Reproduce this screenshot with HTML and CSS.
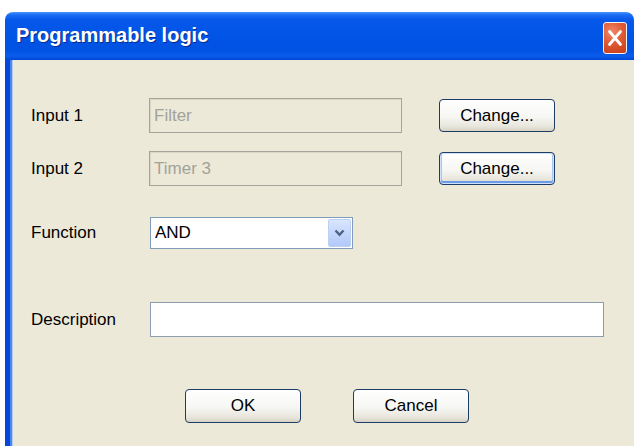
FILE: index.html
```html
<!DOCTYPE html>
<html lang="en">
<head>
<meta charset="utf-8">
<title>Programmable logic</title>
<link rel="stylesheet" href="styles.css">
</head>
<body>
<div class="window">
  <div class="titlebar">
    <span class="title">Programmable logic</span>
    <button class="close" aria-label="Close">
      <svg width="16" height="18" viewBox="0 0 16 18"><path d="M2.5 2.5 L13.5 15.5 M13.5 2.5 L2.5 15.5" stroke="#fff" stroke-width="2.8" stroke-linecap="round" fill="none"/></svg>
    </button>
  </div>
  <div class="content">
    <div class="row row-input1">
      <span class="label">Input 1</span>
      <div class="field disabled">Filter</div>
      <button class="btn change">Change...</button>
    </div>
    <div class="row row-input2">
      <span class="label">Input 2</span>
      <div class="field disabled">Timer 3</div>
      <button class="btn change default">Change...</button>
    </div>
    <div class="row row-function">
      <span class="label">Function</span>
      <div class="select">
        <span class="select-value">AND</span>
        <span class="select-arrow">
          <svg width="11" height="8" viewBox="0 0 11 8"><path d="M1.5 1.5 L5.5 5.8 L9.5 1.5" stroke="#4d6185" stroke-width="2.4" fill="none"/></svg>
        </span>
      </div>
    </div>
    <div class="row row-desc">
      <span class="label">Description</span>
      <div class="field text"></div>
    </div>
    <div class="actions">
      <button class="btn action">OK</button>
      <button class="btn action">Cancel</button>
    </div>
  </div>
</div>
</body>
</html>
```
FILE: styles.css
```css
html, body {
  margin: 0;
  padding: 0;
  background: #ffffff;
  overflow: hidden;
}

body {
  width: 634px;
  height: 446px;
  font-family: "Liberation Sans", Arial, sans-serif;
  font-size: 17px;
  color: #000;
}

.window {
  margin: 12px 0 0 5px;
  width: 629px;
  height: 434px;
  display: flex;
  flex-direction: column;
}

/* XP-style caption bar */
.titlebar {
  height: 48px;
  flex: none;
  display: flex;
  align-items: center;
  padding: 0 7px 0 11px;
  border-radius: 8px 8px 0 0;
  background: linear-gradient(to bottom,
    #4a94ff 0px, #1a6cf4 3px, #0658ea 8px, #0054e6 24px,
    #0052e2 38px, #0a5cec 44px, #0046d0 48px);
}

.title {
  font-weight: bold;
  font-size: 20px;
  color: #fff;
  text-shadow: 1px 1px 0 #0a2a8c;
  padding-bottom: 2px;
}

.close {
  margin-left: auto;
  margin-top: 3px;
  width: 24px;
  height: 32px;
  padding: 0;
  border: 1px solid #f4f4f4;
  border-radius: 3px;
  background: radial-gradient(circle at 35% 30%, #f0896a 0%, #e05a34 45%, #c43c18 100%);
  display: flex;
  align-items: center;
  justify-content: center;
}

/* dialog client area with the blue frame on the left */
.content {
  flex: 1;
  padding: 38px 0 0 26px;
  background: linear-gradient(to right,
    #0a46d8 0px, #0a46d8 5px, #4a8af0 5px, #4a8af0 7px,
    #b4cdf4 7px, #b4cdf4 8px, #ece9d8 8px);
}

.row {
  display: flex;
  align-items: center;
}

.label {
  width: 118px;
  flex: none;
}

.row-input2 { margin-top: 18px; }
.row-function { margin-top: 31px; }
.row-desc { margin-top: 53px; }

.row-function .label,
.row-desc .label { width: 119px; }

.field {
  box-sizing: border-box;
  height: 35px;
  display: flex;
  align-items: center;
  padding-left: 4px;
}

.field.disabled {
  width: 253px;
  border: 1px solid #a6a59b;
  box-shadow: inset 1px 1px 0 #d9d6c8;
  background: #ece9d8;
  color: #a3a29a;
}

.field.text {
  width: 454px;
  border: 1px solid #8f9eae;
  background: #fff;
}

.btn {
  box-sizing: border-box;
  font-family: inherit;
  font-size: 17px;
  color: #000;
  width: 116px;
  padding: 0;
  border: 1px solid #1d3c66;
  border-radius: 4px;
  background: linear-gradient(to bottom, #ffffff 0%, #f6f6f3 55%, #e8e6dc 85%, #d6d2c4 100%);
}

.btn.change {
  height: 33px;
  margin-left: 37px;
}

.btn.default {
  box-shadow: inset 0 0 0 1px #cfe0fa, inset 0 -2px 0 1px #6b9be6, inset 2px 0 0 0 #a9c6f2, inset -2px 0 0 0 #a9c6f2;
}

.select {
  box-sizing: border-box;
  width: 203px;
  height: 32px;
  border: 1px solid #7f9db9;
  background: #fff;
  display: flex;
  align-items: center;
  padding: 0 1px 0 4px;
}

.select-value { flex: 1; }

.select-arrow {
  box-sizing: border-box;
  width: 23px;
  height: 28px;
  border: 1px solid #bccff5;
  border-radius: 2px;
  background: linear-gradient(to bottom, #dbe6fd, #c0d3fb 60%, #b3c9f8);
  display: flex;
  align-items: center;
  justify-content: center;
}

.actions {
  margin-top: 52px;
  padding-left: 154px;
  display: flex;
  gap: 52px;
}

.btn.action {
  height: 34px;
}
```
